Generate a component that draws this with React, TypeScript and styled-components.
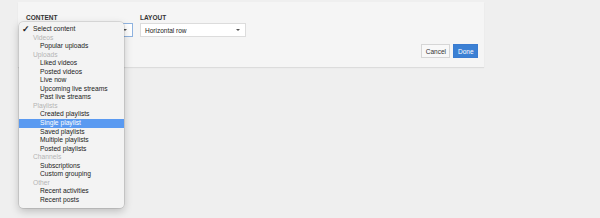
import * as React from "react";
import styled, { createGlobalStyle } from "styled-components";

const GlobalStyle = createGlobalStyle`
  html, body {
    margin: 0;
    padding: 0;
    background: #efefef;
    font-family: "Liberation Sans", Arial, sans-serif;
  }
`;

type Item = { label: string; kind: "check" | "header" | "option"; selected?: boolean };

const items: Item[] = [
  { label: "Select content", kind: "check" },
  { label: "Videos", kind: "header" },
  { label: "Popular uploads", kind: "option" },
  { label: "Uploads", kind: "header" },
  { label: "Liked videos", kind: "option" },
  { label: "Posted videos", kind: "option" },
  { label: "Live now", kind: "option" },
  { label: "Upcoming live streams", kind: "option" },
  { label: "Past live streams", kind: "option" },
  { label: "Playlists", kind: "header" },
  { label: "Created playlists", kind: "option" },
  { label: "Single playlist", kind: "option", selected: true },
  { label: "Saved playlists", kind: "option" },
  { label: "Multiple playlists", kind: "option" },
  { label: "Posted playlists", kind: "option" },
  { label: "Channels", kind: "header" },
  { label: "Subscriptions", kind: "option" },
  { label: "Custom grouping", kind: "option" },
  { label: "Other", kind: "header" },
  { label: "Recent activities", kind: "option" },
  { label: "Recent posts", kind: "option" },
];

const Page = styled.div`
  width: 600px;
  height: 218px;
  padding: 2px 0 0 18px;
  box-sizing: border-box;
`;

const Panel = styled.div`
  width: 466px;
  height: 65px;
  background: #f5f5f5;
  box-shadow: 0 1px 1px rgba(0, 0, 0, 0.08);
  box-sizing: border-box;
  padding: 11px 6px 0 8px;
  display: flex;
  flex-direction: column;
`;

const Fields = styled.div`
  display: flex;
  gap: 7px;
`;

const Field = styled.div`
  display: flex;
  flex-direction: column;
  position: relative;
`;

const Label = styled.div`
  font-size: 6.5px;
  font-weight: bold;
  color: #333;
  height: 10px;
  line-height: 10px;
`;

const Select = styled.div<{ $w: number; $focus?: boolean }>`
  width: ${(p) => p.$w}px;
  height: 14px;
  box-sizing: border-box;
  background: #fff;
  border: 1px solid ${(p) => (p.$focus ? "#8fb3e0" : "#dcdcdc")};
  font-size: 6.5px;
  color: #222;
  display: flex;
  align-items: center;
  justify-content: space-between;
  padding: 0 5px 0 4px;
`;

const Caret = styled.span`
  width: 0;
  height: 0;
  border-left: 2px solid transparent;
  border-right: 2px solid transparent;
  border-top: 2px solid #555;
`;

const Footer = styled.div`
  display: flex;
  justify-content: flex-end;
  gap: 3px;
  margin-top: 7px;
`;

const Button = styled.div<{ $primary?: boolean }>`
  height: 14px;
  box-sizing: border-box;
  padding: 0 3.5px;
  font-size: 6.5px;
  display: flex;
  align-items: center;
  border: 1px solid ${(p) => (p.$primary ? "#3a7bd0" : "#d6d6d6")};
  background: ${(p) => (p.$primary ? "#3b80d4" : "#f8f8f8")};
  color: ${(p) => (p.$primary ? "#fff" : "#333")};
`;

const Menu = styled.div`
  position: absolute;
  left: -7px;
  top: 9px;
  width: 105px;
  padding: 3px 0 4px;
  background: #f3f3f3;
  border-radius: 4px;
  box-shadow: 0 0 0 0.5px rgba(0, 0, 0, 0.18), 0 3px 8px rgba(0, 0, 0, 0.22);
  z-index: 2;
`;

const MenuRow = styled.div<{ $kind: Item["kind"]; $selected?: boolean }>`
  height: 8.55px;
  line-height: 8.55px;
  font-size: 6.7px;
  white-space: nowrap;
  padding-left: ${(p) => (p.$kind === "option" ? 21 : 14)}px;
  position: relative;
  color: ${(p) => (p.$selected ? "#fff" : p.$kind === "header" ? "#b4b4b4" : "#222")};
  background: ${(p) => (p.$selected ? "#5a9af1" : "transparent")};
`;

const Check = styled.span`
  position: absolute;
  left: 3px;
  top: 0;
  font-size: 8.5px;
  font-weight: bold;
  color: #222;
`;

export default function App() {
  return (
    <Page>
      <GlobalStyle />
      <Panel>
        <Fields>
          <Field>
            <Label>CONTENT</Label>
            <Select $w={107} $focus>
              <span />
              <Caret />
            </Select>
            <Menu>
              {items.map((it) => (
                <MenuRow key={it.label} $kind={it.kind} $selected={it.selected}>
                  {it.kind === "check" ? <Check>✓</Check> : null}
                  {it.label}
                </MenuRow>
              ))}
            </Menu>
          </Field>
          <Field>
            <Label>LAYOUT</Label>
            <Select $w={106}>
              <span>Horizontal row</span>
              <Caret />
            </Select>
          </Field>
        </Fields>
        <Footer>
          <Button>Cancel</Button>
          <Button $primary>Done</Button>
        </Footer>
      </Panel>
    </Page>
  );
}
